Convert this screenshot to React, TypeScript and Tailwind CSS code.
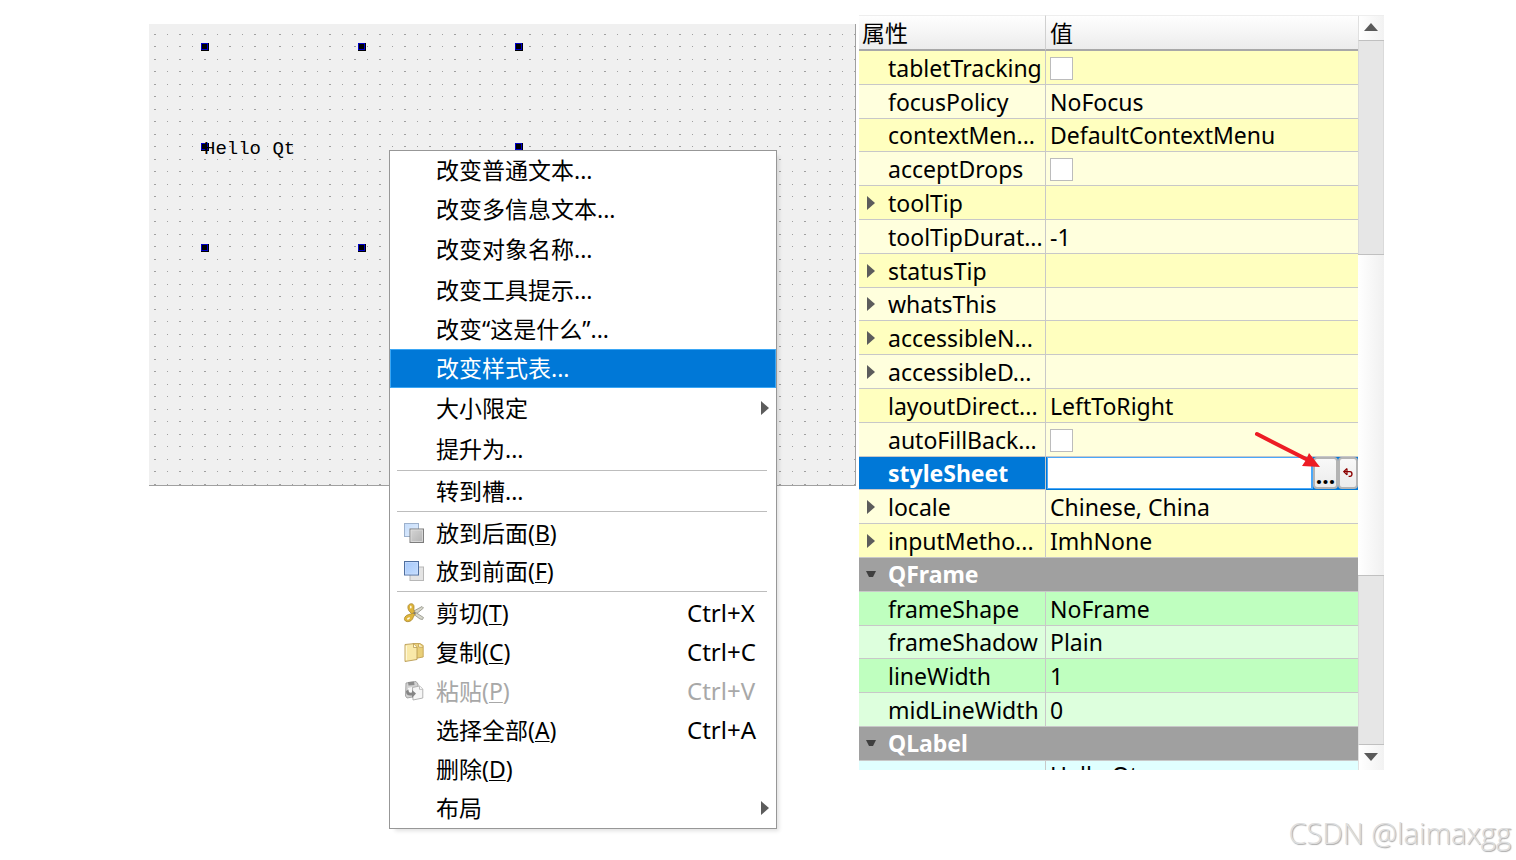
import React from "react";

type Tone = "yellowDark" | "yellowLight" | "greenDark" | "greenLight" | "cyan";

type Property =
  | { kind: "group"; name: string }
  | {
      kind: "text" | "check" | "edit";
      name: string;
      value?: string;
      tone: Tone;
      expandable?: boolean;
    };

const toneClass: Record<Tone, string> = {
  yellowDark: "bg-[#ffffbf]",
  yellowLight: "bg-[#ffffdd]",
  greenDark: "bg-[#bfffbf]",
  greenLight: "bg-[#ddffdd]",
  cyan: "bg-[#ddffff]",
};

const properties: Property[] = [
  { kind: "check", name: "tabletTracking", tone: "yellowDark" },
  { kind: "text", name: "focusPolicy", value: "NoFocus", tone: "yellowLight" },
  { kind: "text", name: "contextMen...", value: "DefaultContextMenu", tone: "yellowDark" },
  { kind: "check", name: "acceptDrops", tone: "yellowLight" },
  { kind: "text", name: "toolTip", tone: "yellowDark", expandable: true },
  { kind: "text", name: "toolTipDurat...", value: "-1", tone: "yellowLight" },
  { kind: "text", name: "statusTip", tone: "yellowDark", expandable: true },
  { kind: "text", name: "whatsThis", tone: "yellowLight", expandable: true },
  { kind: "text", name: "accessibleN...", tone: "yellowDark", expandable: true },
  { kind: "text", name: "accessibleD...", tone: "yellowLight", expandable: true },
  { kind: "text", name: "layoutDirect...", value: "LeftToRight", tone: "yellowDark" },
  { kind: "check", name: "autoFillBack...", tone: "yellowLight" },
  { kind: "edit", name: "styleSheet", tone: "yellowDark" },
  { kind: "text", name: "locale", value: "Chinese, China", tone: "yellowLight", expandable: true },
  { kind: "text", name: "inputMetho...", value: "ImhNone", tone: "yellowDark", expandable: true },
  { kind: "group", name: "QFrame" },
  { kind: "text", name: "frameShape", value: "NoFrame", tone: "greenDark" },
  { kind: "text", name: "frameShadow", value: "Plain", tone: "greenLight" },
  { kind: "text", name: "lineWidth", value: "1", tone: "greenDark" },
  { kind: "text", name: "midLineWidth", value: "0", tone: "greenLight" },
  { kind: "group", name: "QLabel" },
];

function RightTriangle() {
  return (
    <svg width="8" height="16" viewBox="0 0 8 16" className="block shrink-0">
      <path d="M0 1 L8 8 L0 15 Z" fill="#5c5c5c" />
    </svg>
  );
}

function DownTriangle() {
  return (
    <svg width="10" height="8" viewBox="0 0 10 8" className="block shrink-0">
      <path d="M0 1 H10 L7 7 H3 Z" fill="#3f3f3f" />
    </svg>
  );
}

function SendBackIcon() {
  return (
    <svg width="22" height="22" viewBox="0 0 22 22" className="block">
      <defs>
        <linearGradient id="backBlue" x1="0" y1="0" x2="1" y2="1">
          <stop offset="0" stopColor="#c4dcfb" />
          <stop offset="1" stopColor="#e4effd" />
        </linearGradient>
        <linearGradient id="backGray" x1="0" y1="0" x2="1" y2="1">
          <stop offset="0" stopColor="#d6d6d6" />
          <stop offset="1" stopColor="#b2b2b2" />
        </linearGradient>
      </defs>
      <rect x="1.5" y="1.5" width="14" height="13" fill="url(#backBlue)" stroke="#9db1cc" />
      <rect x="7" y="7" width="13.5" height="13.5" fill="url(#backGray)" stroke="#7c7c7c" />
      <rect x="8" y="8" width="11.5" height="11.5" fill="none" stroke="#e2e2e2" strokeWidth="0.7" />
    </svg>
  );
}

function BringFrontIcon() {
  return (
    <svg width="22" height="22" viewBox="0 0 22 22" className="block">
      <defs>
        <linearGradient id="frontBlue" x1="0" y1="0" x2="1" y2="1">
          <stop offset="0" stopColor="#a5c8fb" />
          <stop offset="1" stopColor="#c6defe" />
        </linearGradient>
      </defs>
      <rect x="7" y="7" width="13.5" height="13.5" fill="#e4e4e4" stroke="#b7b7b7" />
      <rect x="1.5" y="1.5" width="14" height="13.5" fill="url(#frontBlue)" stroke="#4f6f9f" />
      <rect x="2.5" y="2.5" width="12" height="11.5" fill="none" stroke="#cfe2ff" strokeWidth="0.6" />
    </svg>
  );
}

function CutIcon() {
  return (
    <svg width="22" height="22" viewBox="0 0 22 22" className="block">
      <path d="M9 10 L19 4.5 L20.5 6 L12 13 Z" fill="#d8d8cc" stroke="#8f8f84" strokeWidth="0.8" />
      <path d="M9 11 L12 10 L20.5 15.5 L19.5 17.5 L17 17 Z" fill="#d8d8cc" stroke="#8f8f84" strokeWidth="0.8" />
      <path
        d="M6.2 2.4 C8.5 .8 11 2 11 4.6 C11 7 10.5 8.5 12 11 L10 13 C8 10.5 5.5 9.5 5 6.5 C4.7 4.8 5 3.2 6.2 2.4 Z"
        fill="#dfb53a"
        stroke="#a88732"
        strokeWidth="0.8"
      />
      <path
        d="M2 15 C3.5 12.2 7 12.8 11.5 10.5 L12.5 12 C10 14 10.5 17 8 18.7 C5.5 20.2 2.5 20 1.6 18 C1.2 17 1.4 16 2 15 Z"
        fill="#dfb53a"
        stroke="#a88732"
        strokeWidth="0.8"
      />
      <ellipse cx="7.8" cy="5" rx="0.8" ry="1.5" fill="#fffdf0" />
      <ellipse cx="5.5" cy="16.4" rx="1.7" ry="0.9" fill="#fffdf0" transform="rotate(-32 5.5 16.4)" />
      <circle cx="11.4" cy="11.3" r="1" fill="#777" />
    </svg>
  );
}

function CopyIcon() {
  return (
    <svg width="22" height="22" viewBox="0 0 22 22" className="block">
      <path d="M10 2.5 H17 L20.2 4.5 V16 L12 17.5 Z" fill="#e9cf78" stroke="#c2a255" strokeWidth="0.9" />
      <path d="M15.5 2.7 V6 L20 6.5" fill="#fdf6d4" stroke="#c2a255" strokeWidth="0.8" />
      <path d="M2 3.5 L10.5 2.7 L14 6.5 V18.5 L2 20.5 Z" fill="#f9e9a9" stroke="#b99b52" strokeWidth="0.9" />
      <path d="M10.5 2.9 V6.5 H14" fill="#fffbe4" stroke="#b99b52" strokeWidth="0.8" />
      <path d="M3.3 5 V19" stroke="#fffbe0" strokeWidth="1" />
    </svg>
  );
}

function PasteIcon() {
  return (
    <svg width="22" height="22" viewBox="0 0 22 22" className="block">
      <path d="M3 3 L13 1.5 L15 4 V16 L4 18 L2.5 16 Z" fill="#d2d2d2" stroke="#9e9e9e" strokeWidth="0.9" />
      <path d="M5 2 L11 1.5 L11.5 5 L5.5 5.5 Z" fill="#8d8d8d" />
      <path d="M5 8 L9 7 V13 L5 14 Z" fill="#f7f7f7" />
      <path d="M9.5 7.5 L16.5 6 L19.8 9 V18 L10 20 Z" fill="#f6f6f6" stroke="#adadad" strokeWidth="0.9" />
      <path d="M16.5 6.3 V9.3 H19.5" fill="#fff" stroke="#adadad" strokeWidth="0.8" />
      <path d="M3 11 C3 15 5 16 9 15.5 L9 18 L13 13.5 L9 10 V12.5 C6 13 5.5 12 5.5 9.5 Z" fill="#858585" />
    </svg>
  );
}

type MenuEntry =
  | "separator"
  | {
      label: string;
      mnemonic?: string;
      shortcut?: string;
      icon?: React.ReactNode;
      height: string;
      submenu?: boolean;
      active?: boolean;
      disabled?: boolean;
    };

const menuEntries: MenuEntry[] = [
  { label: "改变普通文本...", height: "h-[39px]" },
  { label: "改变多信息文本...", height: "h-[39px]" },
  { label: "改变对象名称...", height: "h-[41px]" },
  { label: "改变工具提示...", height: "h-[41px]" },
  { label: "改变“这是什么”...", height: "h-[38px]" },
  { label: "改变样式表...", height: "h-[39px]", active: true },
  { label: "大小限定", height: "h-[41px]", submenu: true },
  { label: "提升为...", height: "h-[41px]" },
  "separator",
  { label: "转到槽...", height: "h-[38px]" },
  "separator",
  { label: "放到后面", mnemonic: "B", height: "h-[39px]", icon: <SendBackIcon /> },
  { label: "放到前面", mnemonic: "F", height: "h-[38px]", icon: <BringFrontIcon /> },
  "separator",
  { label: "剪切", mnemonic: "T", shortcut: "Ctrl+X", height: "h-[39px]", icon: <CutIcon /> },
  { label: "复制", mnemonic: "C", shortcut: "Ctrl+C", height: "h-[39px]", icon: <CopyIcon /> },
  {
    label: "粘贴",
    mnemonic: "P",
    shortcut: "Ctrl+V",
    height: "h-[39px]",
    icon: <PasteIcon />,
    disabled: true,
  },
  { label: "选择全部", mnemonic: "A", shortcut: "Ctrl+A", height: "h-[39px]" },
  { label: "删除", mnemonic: "D", height: "h-[39px]" },
  { label: "布局", height: "h-[39px]", submenu: true },
];

function ContextMenu() {
  return (
    <div
      role="menu"
      className="absolute top-[126px] left-[240px] z-10 flex w-[388px] flex-col border border-[#979797] bg-white shadow-[4px_4px_4px_-2px_rgba(0,0,0,0.12)]"
    >
      {menuEntries.map((entry, i) =>
        entry === "separator" ? (
          <hr key={i} className="mr-[9px] mb-[2px] ml-[7px] border-t border-[#bdbdbd]" />
        ) : (
          <button
            key={i}
            type="button"
            role="menuitem"
            disabled={entry.disabled}
            className={`flex w-full items-center pb-[2px] text-left text-[23px] leading-[32px] whitespace-nowrap ${entry.height} ${
              entry.active
                ? "bg-[#0078d7] text-white outline-1 -outline-offset-1 outline-[#3ba7f5]"
                : entry.disabled
                  ? "text-[#a8a8a8]"
                  : "text-black"
            }`}
          >
            <span className="w-[46px] shrink-0 pl-[13px]">{entry.icon}</span>
            <span className="flex-1">
              {entry.label}
              {entry.mnemonic && (
                <>
                  (<span className="underline decoration-1 underline-offset-2">{entry.mnemonic}</span>)
                </>
              )}
            </span>
            {entry.shortcut && <span className="w-[89px] shrink-0 text-[24px]">{entry.shortcut}</span>}
            {entry.submenu && (
              <span className="pr-[7px]">
                <RightTriangle />
              </span>
            )}
          </button>
        )
      )}
    </div>
  );
}

const handles = [
  "left-[52px] top-[19px]",
  "left-[209px] top-[19px]",
  "left-[366px] top-[19px]",
  "left-[52px] top-[119px]",
  "left-[366px] top-[119px]",
  "left-[52px] top-[220px]",
  "left-[209px] top-[220px]",
];

function FormCanvas() {
  return (
    <section className="relative mt-[9px] h-[462px] min-w-0 flex-1 border-r border-b border-[#a0a0a0] bg-[#f0f0f0]">
      <svg className="absolute inset-0 h-full w-full">
        <defs>
          <pattern id="grid" width="25" height="25" patternUnits="userSpaceOnUse">
            <rect x="5" y="10" width="2" height="1" fill="#a0a0a0" />
            <rect x="18" y="10" width="1" height="1" fill="#a0a0a0" />
            <rect x="5" y="22" width="2" height="1" fill="#a0a0a0" />
            <rect x="18" y="22" width="1" height="1" fill="#a0a0a0" />
          </pattern>
        </defs>
        <rect width="100%" height="100%" fill="url(#grid)" />
      </svg>
      {handles.map((place) => (
        <svg key={place} width="8" height="8" viewBox="0 0 8 8" className={`absolute ${place}`}>
          <rect width="8" height="8" fill="#000" />
          <rect x="0.5" y="0.5" width="6" height="6" fill="none" stroke="#0000c8" />
        </svg>
      ))}
      <span className="absolute top-[113px] left-[55px] font-['Liberation_Mono',monospace] text-[19px] leading-[24px] whitespace-pre text-black">
        Hello Qt
      </span>
      <ContextMenu />
    </section>
  );
}

function PropertyRow({ item }: { item: Property }) {
  const rowHeight = "h-[34px] nth-[5n+3]:h-[33px]";
  if (item.kind === "group") {
    return (
      <tr className={`${rowHeight} bg-[#a0a0a0]`}>
        <th
          colSpan={2}
          scope="rowgroup"
          className="border-b border-[#c8c8c8] p-0 pb-px text-left font-bold text-white"
        >
          <div className="flex items-center">
            <button type="button" aria-label={item.name} className="w-[29px] pl-[7px]">
              <DownTriangle />
            </button>
            {item.name}
          </div>
        </th>
      </tr>
    );
  }
  const editing = item.kind === "edit";
  return (
    <tr className={`${rowHeight} ${editing ? "bg-[#0078d7] text-white" : toneClass[item.tone]}`}>
      <th
        scope="row"
        id={`name-${item.name}`}
        className={`border-r border-b border-[#c8c8c8] p-0 text-left ${editing ? "font-bold" : "font-normal"}`}
      >
        <div className="flex items-center">
          {item.expandable ? (
            <button type="button" aria-label={item.name} className="w-[29px] shrink-0 pl-[8px]">
              <RightTriangle />
            </button>
          ) : (
            <span className="w-[29px] shrink-0" />
          )}
          {item.name}
        </div>
      </th>
      <td className={`border-b p-0 ${editing ? "border-[#0078d7]" : "border-[#c8c8c8]"}`}>
        {item.kind === "check" && (
          <input
            type="checkbox"
            aria-labelledby={`name-${item.name}`}
            className="mt-px ml-[4px] block size-[23px] appearance-none border border-[#bcbcbc] bg-white"
          />
        )}
        {item.kind === "text" && <span className="pl-[4px]">{item.value}</span>}
        {editing && (
          <div className="flex h-[32px] pl-px">
            <input
              type="text"
              aria-labelledby={`name-${item.name}`}
              className="h-full min-w-0 flex-1 border border-r-2 border-[#4aa8fa] bg-white px-1 text-black outline-none"
            />
            <button
              type="button"
              className="flex h-full w-[25px] items-center justify-center rounded-sm border-2 border-[#b4b4b4] bg-linear-to-b from-[#f8f8f8] to-[#ececec] pt-[4px] font-bold text-black"
            >
              ...
            </button>
            <button
              type="button"
              aria-label="reset"
              className="flex h-full w-[20px] items-center justify-center rounded-sm border-2 border-[#b4b4b4] bg-linear-to-b from-[#f8f8f8] to-[#ececec]"
            >
              <svg width="10" height="10" viewBox="0 0 10 10">
                <path d="M4 0.5 V7 M4 0.5 L0.8 3.6 L4 6.8" fill="none" stroke="#8b0000" strokeWidth="1.2" />
                <path d="M1 3.6 H7 C9.6 3.6 9.6 8.4 7 8.4 H5.6" fill="none" stroke="#8b0000" strokeWidth="1.4" />
              </svg>
            </button>
          </div>
        )}
      </td>
    </tr>
  );
}

function ScrollBar() {
  return (
    <div className="flex w-[26px] shrink-0 flex-col border-t border-[#eeeeee]">
      <button
        type="button"
        aria-label="up"
        className="flex h-[25px] items-center justify-center border-b border-l border-b-[#c0c0c0] border-l-[#e0e0e0] bg-linear-to-r from-white to-[#f2f2f2] pr-[2px] pb-[2px]"
      >
        <svg width="14" height="8" viewBox="0 0 14 8">
          <path d="M7 0 L14 8 H0 Z" fill="#5a5a5a" />
        </svg>
      </button>
      <div className="h-[213px] border-x border-[#dadada] bg-[#e6e6e6]" />
      <div className="flex-1 border-y border-[#c0c0c0] bg-linear-to-r from-white to-[#f0f0f0]" />
      <div className="h-[168px] border-x border-[#dadada] bg-[#e6e6e6]" />
      <button
        type="button"
        aria-label="down"
        className="flex h-[26px] items-center justify-center border-t border-l border-t-[#c0c0c0] border-l-[#e0e0e0] bg-linear-to-r from-white to-[#f2f2f2] pr-[2px] pb-[2px]"
      >
        <svg width="14" height="8" viewBox="0 0 14 8">
          <path d="M0 0 H14 L7 8 Z" fill="#5a5a5a" />
        </svg>
      </button>
    </div>
  );
}

function PropertyEditor() {
  return (
    <section className="relative flex h-[755px] w-[525px] shrink-0 overflow-hidden">
      <div className="min-w-0 flex-1">
        <table className="w-full table-fixed border-separate border-spacing-0 text-[23px] leading-[32px] whitespace-nowrap text-black">
          <colgroup>
            <col className="w-[187px]" />
            <col />
          </colgroup>
          <thead>
            <tr className="h-[36px] bg-linear-to-b from-white to-[#ebebeb]">
              <th className="border-t border-r border-b-2 border-t-[#eeeeee] border-r-[#d0d0d0] border-b-[#a8a8a8] p-0 pt-px pl-[3px] text-left font-normal">
                属性
              </th>
              <th className="border-t border-b-2 border-t-[#eeeeee] border-b-[#a8a8a8] p-0 pt-px pl-[4px] text-left font-normal">
                值
              </th>
            </tr>
          </thead>
          <tbody>
            {properties.map((item) => (
              <PropertyRow key={item.name} item={item} />
            ))}
            <tr className="h-[34px] bg-[#e0ffff]">
              <th className="border-r border-[#c8c8c8] p-0" />
              <td className="p-0 pl-[4px] align-top leading-[28px]">Hello Qt</td>
            </tr>
          </tbody>
        </table>
      </div>
      <ScrollBar />
      <svg
        width="68"
        height="40"
        viewBox="0 0 68 40"
        className="pointer-events-none absolute top-[416px] left-[394px]"
      >
        <path d="M4 3 L53 28" stroke="#ed1c24" strokeWidth="4" strokeLinecap="round" />
        <path d="M56 22 L67 36 L49 35 L53 29 Z" fill="#ed1c24" />
      </svg>
    </section>
  );
}

export default function App() {
  return (
    <div className="flex min-h-screen flex-col bg-white pt-[15px] font-['Noto_Sans','Noto_Sans_CJK_SC',sans-serif]">
      <main className="flex items-start gap-[3px] pr-[132px] pl-[149px]">
        <FormCanvas />
        <PropertyEditor />
      </main>
      <footer className="pt-[43px] pr-[5px] text-right font-['Open_Sans',sans-serif] text-[29px] leading-[40px] font-light text-[#dedede] [text-shadow:1px_1px_1px_#a8a8a8]">
        CSDN @laimaxgg
      </footer>
    </div>
  );
}
